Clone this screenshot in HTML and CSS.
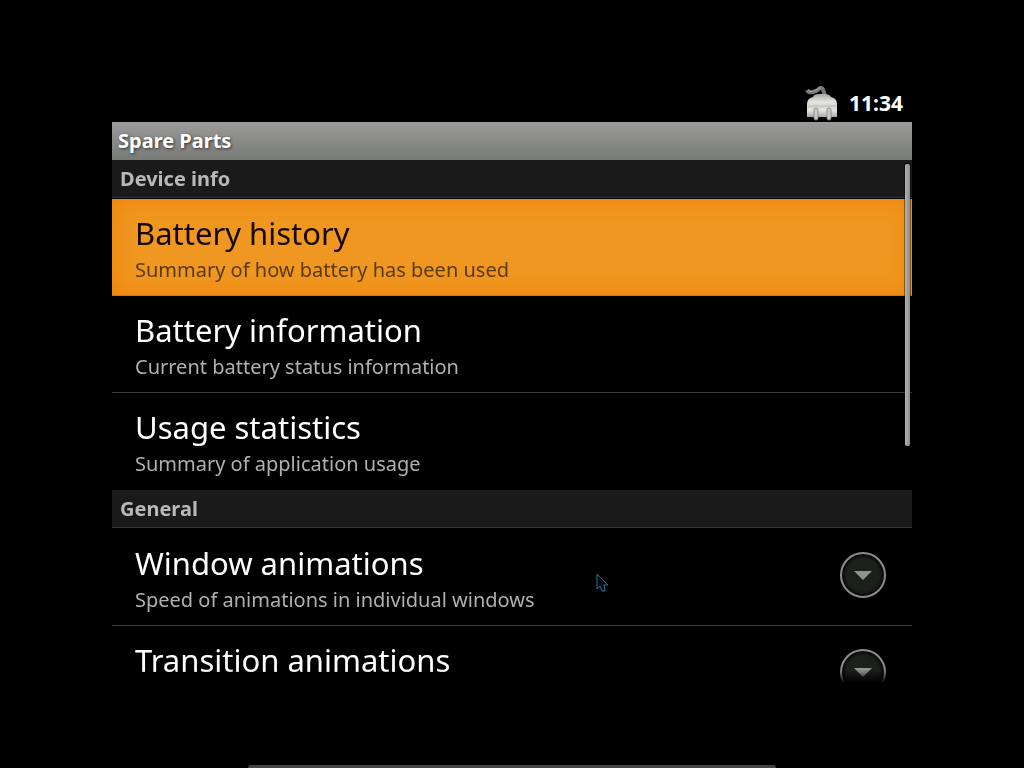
FILE: index.html
```html
<!DOCTYPE html>
<html lang="en">
  <head>
    <meta charset="utf-8">
    <title>Spare Parts</title>
    <meta name="viewport" content="width=device-width, initial-scale=1.0">
    <link rel="stylesheet" href="styles.css">
  </head>
  <body>
    <main class="screen">
      <div class="status-bar">
        <svg class="plug" width="34" height="36" viewBox="0 0 34 36" aria-hidden="true">
          <defs>
            <linearGradient id="plug-body" x1="0" y1="0" x2="0" y2="1">
              <stop offset="0" stop-color="#a8a8a6"/>
              <stop offset="0.35" stop-color="#e4e5e2"/>
              <stop offset="0.55" stop-color="#d4d5d1"/>
              <stop offset="0.7" stop-color="#e6e7e3"/>
              <stop offset="1" stop-color="#a9aaa6"/>
            </linearGradient>
          </defs>
          <path d="M2 5C4 9 8 7 11 6C14 5 13 3 16 3C19 3 18 7 20 10" fill="none" stroke="#777" stroke-width="4"/>
          <path d="M3 5C6 8 8 6 11 5C14 4 14 2 16 3" fill="none" stroke="#aaa" stroke-width="1"/>
          <path d="M2 32V20C2 15 4 13 8 12C9 9 12 9 17 9C22 9 24 9 26 12C30 13 32 15 32 20V32Z" fill="url(#plug-body)"/>
          <path d="M3 21H31" stroke="#bbbcb8"/>
          <rect x="9" y="23" width="4" height="12" rx="2" fill="#c9cac5" stroke="#8b8d88"/>
          <rect x="22" y="23" width="4" height="12" rx="2" fill="#c9cac5" stroke="#8b8d88"/>
        </svg>
        <time class="clock">11:34</time>
      </div>
      <h1 class="title-bar">Spare Parts</h1>
      <div class="list">
        <h2 class="category">Device info</h2>
        <a class="row selected" href="#">
          <span class="text">
            <span class="name">Battery history</span>
            <span class="summary">Summary of how battery has been used</span>
          </span>
        </a>
        <a class="row" href="#">
          <span class="text">
            <span class="name">Battery information</span>
            <span class="summary">Current battery status information</span>
          </span>
        </a>
        <a class="row last" href="#">
          <span class="text">
            <span class="name">Usage statistics</span>
            <span class="summary">Summary of application usage</span>
          </span>
        </a>
        <h2 class="category">General</h2>
        <div class="row">
          <div class="text">
            <span class="name" id="window-name">Window animations</span>
            <span class="summary">Speed of animations in individual windows</span>
          </div>
          <button class="more" type="button" aria-labelledby="window-name">
            <svg width="18" height="10" viewBox="0 0 18 10"><path d="M0 1H18L9 10Z"/></svg>
          </button>
        </div>
        <div class="row last">
          <div class="text">
            <span class="name" id="transition-name">Transition animations</span>
          </div>
          <button class="more" type="button" aria-labelledby="transition-name">
            <svg width="18" height="10" viewBox="0 0 18 10"><path d="M0 1H18L9 10Z"/></svg>
          </button>
        </div>
        <div class="scrollbar"></div>
      </div>
    </main>
    <div class="dock"></div>
    <svg class="pointer" width="14" height="20" viewBox="0 0 14 20" aria-hidden="true">
      <path d="M1 1V16L4 13L6 18L9 18L8 12H12Z"/>
    </svg>
  </body>
</html>
```

FILE: styles.css
```css
* {
  box-sizing: border-box;
}
body {
  background-color: #000;
  color: #fff;
  font-family: "Noto Sans", "Open Sans", sans-serif;
  margin: 0;
  padding: 84px 16px;
  height: 100vh;
  overflow: hidden;
}
.screen {
  display: flex;
  flex-direction: column;
  max-width: 800px;
  height: 100%;
  margin: 0 auto;
}
.status-bar {
  display: flex;
  flex: none;
  justify-content: flex-end;
  align-items: center;
  gap: 10px;
  height: 38px;
  padding-right: 9px;
}
.clock {
  font-size: 21px;
  font-weight: bold;
}
.title-bar {
  flex: none;
  height: 38px;
  margin: 0;
  padding-left: 6px;
  background: linear-gradient(#9b9c9a, #787a76);
  font-size: 20px;
  line-height: 37px;
  text-shadow: 1px 1px 3px #333;
}
.list {
  position: relative;
  flex: 1;
  min-height: 0;
  overflow: hidden;
  -webkit-mask-image: linear-gradient(to top, transparent 1px, #000 14px);
  mask-image: linear-gradient(to top, transparent 1px, #000 14px);
}
.category {
  height: 38px;
  margin: 0 0 1px;
  padding-left: 8px;
  background-color: #1a1a1a;
  border-bottom: 1px solid #343634;
  color: #b8b8b8;
  font-size: 20px;
  line-height: 37px;
}
.row {
  display: flex;
  justify-content: space-between;
  height: 97px;
  padding: 12px 26px 0 23px;
  border-bottom: 1px solid #3a3a3a;
  color: #fff;
  text-decoration: none;
}
.row.last {
  border-bottom-color: transparent;
}
.row.selected {
  background-color: #ef9720;
  box-shadow: inset 0 0 24px #f08209;
  border-bottom-color: #a98343;
  color: #140600;
}
.text {
  display: flex;
  flex-direction: column;
}
.name {
  font-size: 31px;
  line-height: 44px;
}
.summary {
  color: #b0b0b0;
  font-size: 20px;
  line-height: 29px;
}
.selected .summary {
  color: #5a3a0d;
}
.more {
  display: flex;
  align-items: center;
  justify-content: center;
  width: 46px;
  height: 46px;
  margin-top: 11px;
  padding: 0;
  background-color: #1d1f1d;
  border: 2px solid #8a8c8a;
  border-radius: 50%;
  box-shadow: inset 0 0 3px 2px #050505;
  cursor: pointer;
}
.more path {
  fill: #8f938c;
}
.scrollbar {
  position: absolute;
  top: 4px;
  right: 2px;
  width: 5px;
  height: 282px;
  background: linear-gradient(to right, #b2b2b0, #8c8c8a);
  border-radius: 2px;
  box-shadow: 0 0 0 1px rgba(0, 0, 0, 0.4);
}
.dock {
  position: absolute;
  bottom: 0;
  left: 24.2%;
  right: 24.2%;
  height: 3px;
  background-color: #444;
  border-radius: 6px 6px 0 0;
}
.pointer {
  position: absolute;
  top: 573px;
  left: 596px;
}
.pointer path {
  fill: #020a10;
  stroke: #1d7694;
}
```
